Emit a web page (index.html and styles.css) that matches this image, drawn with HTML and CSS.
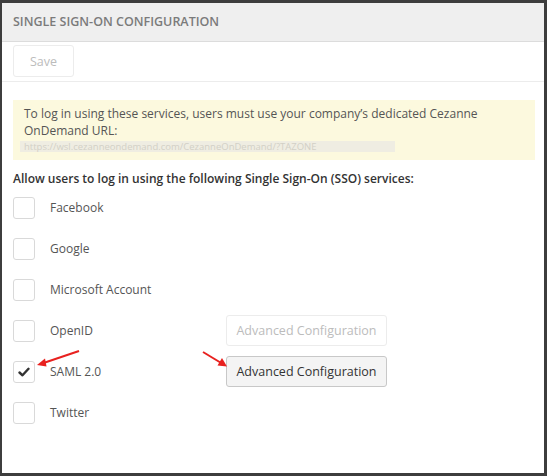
FILE: index.html
```html
<!DOCTYPE html>
<html>
<head>
<meta charset="utf-8">
<link rel="stylesheet" href="styles.css">
</head>
<body>
<div class="panel">
  <div class="header">Single Sign-On Configuration</div>
  <div class="toolbar"><button class="btn btn-disabled save">Save</button></div>
  <div class="content">
    <div class="notice">
      <p>To log in using these services, users must use your company’s dedicated Cezanne OnDemand URL:</p>
      <div class="url">https://wsl.cezanneondemand.com/CezanneOnDemand/?TAZONE</div>
    </div>
    <div class="heading">Allow users to log in using the following Single Sign-On (SSO) services:</div>
    <div class="list">
      <div class="row"><span class="cb"></span><span class="label">Facebook</span></div>
      <div class="row"><span class="cb"></span><span class="label">Google</span></div>
      <div class="row"><span class="cb"></span><span class="label">Microsoft Account</span></div>
      <div class="row"><span class="cb"></span><span class="label">OpenID</span><button class="btn btn-disabled adv">Advanced Configuration</button></div>
      <div class="row"><span class="cb checked"><svg width="12" height="10" viewBox="0 0 12 10"><path d="M1.5 5.5 L4.5 8.3 L10.5 1.8" fill="none" stroke="#333" stroke-width="2.4" stroke-linecap="round" stroke-linejoin="round"/></svg></span><span class="label">SAML 2.0</span><button class="btn btn-active adv">Advanced Configuration</button></div>
      <div class="row"><span class="cb"></span><span class="label">Twitter</span></div>
    </div>
  </div>
  <svg class="arrows" width="547" height="476" viewBox="0 0 547 476">
    <line x1="79" y1="351" x2="42" y2="363.5" stroke="#e8211f" stroke-width="2"/>
    <path d="M37 365 L45 358.5 L46.5 366.5 Z" fill="#e8211f"/>
    <line x1="203" y1="352" x2="222" y2="363.5" stroke="#e8211f" stroke-width="2"/>
    <path d="M227 366.5 L217.5 365.5 L222 358 Z" fill="#e8211f"/>
  </svg>
</div>
</body>
</html>
```
FILE: styles.css
```css
html, body {
  margin: 0;
  padding: 0;
}
body {
  background: #3d3d3d;
  width: 547px;
  height: 476px;
  padding: 3px 3px 3px 2px;
  box-sizing: border-box;
  font-family: "Open Sans", "Liberation Sans", sans-serif;
  font-size: 12px;
}
.panel {
  background: #fff;
  height: 470px;
  position: relative;
}
.header {
  height: 38px;
  line-height: 38px;
  background: #efefef;
  border-bottom: 1px solid #dcdcdc;
  padding-left: 11px;
  text-transform: uppercase;
  font-weight: 600;
  color: #7b7b7b;
  font-size: 12.5px;
}
.toolbar {
  padding: 3px 11px 4px;
  border-bottom: 1px solid #ececec;
  display: flex;
}
.btn {
  font-family: "Open Sans", "Liberation Sans", sans-serif;
  font-size: 12.5px;
  height: 32px;
  border-radius: 3px;
  padding: 0;
  box-sizing: border-box;
  white-space: nowrap;
  text-align: center;
}
.btn-disabled {
  background: #fff;
  border: 1px solid #ececec;
  color: #bcbcbc;
}
.btn-active {
  background: #f4f4f4;
  border: 1px solid #c8c8c8;
  color: #333;
}
.save {
  width: 61px;
}
.content {
  padding: 18px 9px 0 11px;
}
.notice {
  background: #fcf9de;
  padding: 5px 11px 8px;
  color: #555;
  line-height: 17px;
}
.notice p {
  margin: 0;
}
.url {
  margin: 2px 0 0 -4px;
  width: 371px;
  height: 11px;
  padding-left: 4px;
  background: #efede2;
  line-height: 11px;
  font-size: 9.5px;
  color: #d2d0c6;
  white-space: nowrap;
}
.heading {
  margin-top: 10px;
  font-weight: 600;
  color: #333;
  line-height: 17px;
}
.list {
  margin-top: 5px;
  display: flex;
  flex-direction: column;
  gap: 10px;
}
.row {
  display: flex;
  align-items: center;
  height: 31px;
}
.cb {
  width: 22px;
  height: 22px;
  box-sizing: border-box;
  border: 1px solid #d9d9d9;
  border-radius: 3px;
  display: flex;
  align-items: center;
  justify-content: center;
  background: #fff;
}
.label {
  margin-left: 15px;
  width: 176px;
  color: #555;
}
.adv {
  width: 161px;
  height: 31px;
}
.arrows {
  position: absolute;
  left: -2px;
  top: -3px;
  pointer-events: none;
}
```
